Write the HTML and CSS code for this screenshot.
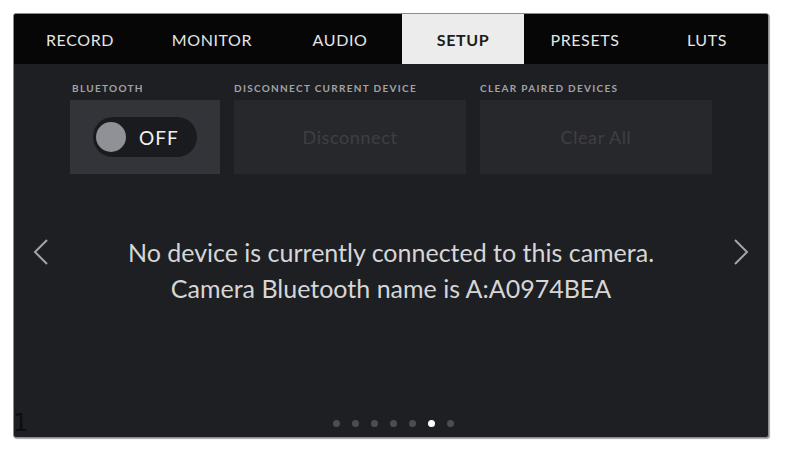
FILE: index.html
```html
<!DOCTYPE html>
<html>
<head>
<meta charset="utf-8">
<link rel="stylesheet" href="styles.css">
</head>
<body>
<div class="frame">
  <nav class="tabs">
    <div class="tab">RECORD</div>
    <div class="tab">MONITOR</div>
    <div class="tab">AUDIO</div>
    <div class="tab active">SETUP</div>
    <div class="tab">PRESETS</div>
    <div class="tab">LUTS</div>
  </nav>
  <main class="content">
    <section class="settings">
      <div class="setting">
        <div class="label">BLUETOOTH</div>
        <div class="box box-toggle">
          <div class="toggle"><span class="knob"></span><span class="toggle-text">OFF</span></div>
        </div>
      </div>
      <div class="setting wide">
        <div class="label">DISCONNECT CURRENT DEVICE</div>
        <div class="box box-disabled">Disconnect</div>
      </div>
      <div class="setting wide">
        <div class="label">CLEAR PAIRED DEVICES</div>
        <div class="box box-disabled">Clear All</div>
      </div>
    </section>
    <section class="message-row">
      <svg class="arrow" width="16" height="26" viewBox="0 0 16 26"><polyline points="14,1 2,13 14,25" fill="none" stroke="#a4a4a6" stroke-width="2"/></svg>
      <div class="message">
        <p>No device is currently connected to this camera.</p>
        <p>Camera Bluetooth name is A:A0974BEA</p>
      </div>
      <svg class="arrow" width="16" height="26" viewBox="0 0 16 26"><polyline points="2,1 14,13 2,25" fill="none" stroke="#a4a4a6" stroke-width="2"/></svg>
    </section>
    <div class="dots">
      <span class="dot"></span><span class="dot"></span><span class="dot"></span><span class="dot"></span><span class="dot"></span><span class="dot on"></span><span class="dot"></span>
    </div>
  </main>
  <span class="page-num">1</span>
</div>
</body>
</html>
```

FILE: styles.css
```css
html, body {
  margin: 0;
  padding: 0;
  background: #ffffff;
}
body {
  font-family: Lato, "Open Sans", sans-serif;
  width: 787px;
  height: 453px;
  overflow: hidden;
}
.frame {
  position: relative;
  margin: 13px 0 0 13px;
  width: 754px;
  height: 423px;
  border: 1px solid #8c8c8c;
  border-radius: 3px;
  background: #1e1f23;
  box-shadow: 1px 1px 1px rgba(0,0,0,0.35);
  display: flex;
  flex-direction: column;
  overflow: hidden;
}
.tabs {
  display: grid;
  grid-template-columns: 132px 132px 124px 122px 122px 122px;
  height: 50px;
  background: #060606;
  flex: none;
}
.tab {
  display: flex;
  align-items: center;
  justify-content: center;
  color: #e4e4e4;
  font-size: 16px;
  letter-spacing: 0.6px;
  padding-top: 1px;
}
.tab.active {
  background: #ececec;
  color: #1c1c1c;
  font-weight: 700;
}
.content {
  flex: 1;
  display: flex;
  flex-direction: column;
}
.settings {
  display: flex;
  gap: 14px;
  padding: 18px 0 0 56px;
}
.setting {
  width: 150px;
  display: flex;
  flex-direction: column;
  gap: 6px;
}
.setting.wide {
  width: 232px;
}
.label {
  font-size: 10px;
  line-height: 12px;
  font-weight: 700;
  letter-spacing: 1.3px;
  color: #a2a3a6;
  padding-left: 2px;
}
.setting.wide .label {
  padding-left: 0;
}
.box {
  height: 74px;
  display: flex;
  align-items: center;
  justify-content: center;
}
.box-toggle {
  background: #333439;
}
.box-disabled {
  background: #27282c;
  color: #3e3f44;
  font-size: 18px;
  letter-spacing: 0.6px;
}
.toggle {
  width: 104px;
  height: 40px;
  border-radius: 20px;
  background: #1a1b1e;
  display: flex;
  align-items: center;
  padding-left: 3px;
  box-sizing: border-box;
  gap: 13px;
}
.knob {
  width: 30px;
  height: 30px;
  border-radius: 50%;
  background: #8f9197;
}
.toggle-text {
  color: #f2f2f2;
  font-size: 19px;
  letter-spacing: 1px;
}
.message-row {
  display: flex;
  align-items: flex-start;
  justify-content: space-between;
  margin-top: 60px;
  padding: 0 19px 0 19px;
}
.arrow {
  margin-top: 5px;
}
.message {
  flex: 1;
  text-align: center;
  color: #d6d6d6;
  font-size: 25px;
  line-height: 36px;
}
.message p {
  margin: 0;
}
.dots {
  margin-top: auto;
  display: flex;
  justify-content: center;
  gap: 12px;
  padding: 0 0 10px 4px;
}
.dot {
  width: 7px;
  height: 7px;
  border-radius: 50%;
  background: #4c4d52;
}
.dot.on {
  background: #ffffff;
}
.page-num {
  position: absolute;
  left: -1px;
  top: 395px;
  font-family: "DejaVu Sans", sans-serif;
  font-size: 24px;
  font-weight: 400;
  color: #0e0e0e;
  line-height: 28px;
}
```
